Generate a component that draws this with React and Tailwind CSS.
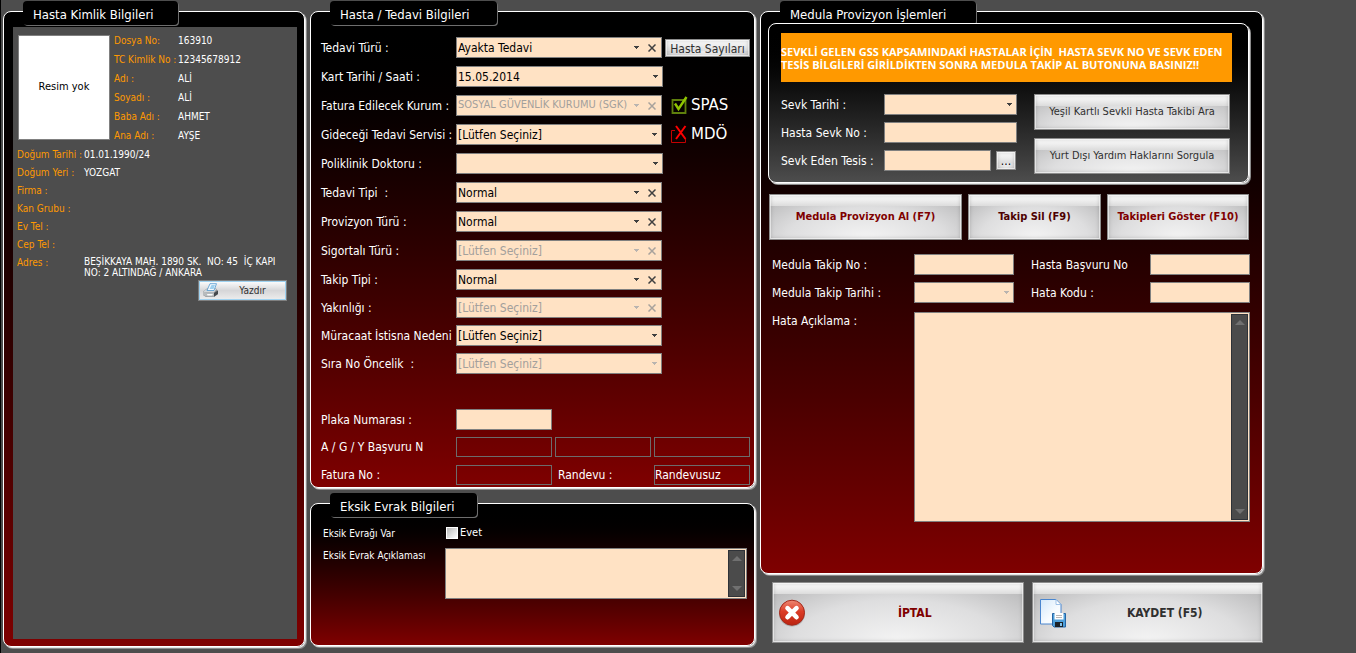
import { useId } from 'react'
import clsx from 'clsx'

const IDENTITY = [
  ['Dosya No:', '163910'],
  ['TC Kimlik No :', '12345678912'],
  ['Adı :', 'ALİ'],
  ['Soyadı :', 'ALİ'],
  ['Baba Adı :', 'AHMET'],
  ['Ana Adı :', 'AYŞE'],
]

const DETAILS = [
  ['Doğum Tarihi :', '01.01.1990/24'],
  ['Doğum Yeri :', 'YOZGAT'],
  ['Firma :', ''],
  ['Kan Grubu :', ''],
  ['Ev Tel :', ''],
  ['Cep Tel :', ''],
]

const EMPTY = '[Lütfen Seçiniz]'

const BUTTON_FACE =
  'border border-[#8c8c8c] bg-[linear-gradient(#ffffff,#dcdcdc_11px,transparent_11px),radial-gradient(ellipse_75%_130%_at_50%_100%,#f4f4f4,#dededf_55%,#b4b4b5)] shadow-[inset_0_0_0_1px_rgba(255,255,255,0.6),inset_0_0_4px_rgba(0,0,0,0.25)]'

function Panel({ title, tabClass, className, children }) {
  return (
    <section
      className={clsx(
        'relative rounded-lg border border-white bg-linear-to-b from-black to-[#7f0000] shadow-[1px_1px_0_#e4e4e4,2px_2px_0_#8a8a8a]',
        className,
      )}
    >
      <h2
        className={clsx(
          'absolute -top-[11px] left-[19px] h-6 rounded-sm bg-black pl-[10px] text-[13px] leading-[28px] text-white shadow-[1px_1px_0_#6e6e6e]',
          tabClass,
        )}
      >
        {title}
      </h2>
      {children}
    </section>
  )
}

function Arrow({ className }) {
  return (
    <svg
      viewBox="0 0 5 3"
      shapeRendering="crispEdges"
      className={clsx('pointer-events-none h-[3px] w-[5px]', className)}
      fill="currentColor"
    >
      <path d="M0 0h5v1h-1v1h-1v1h-1v-1h-1v-1h-1z" />
    </svg>
  )
}

function Combo({ id, value = '', disabled, clearable, small, className }) {
  return (
    <div
      className={clsx(
        'relative flex h-[21px] items-center border border-[#808080] bg-[#ffe2c4]',
        disabled ? 'text-[#a3a09c]' : 'text-black',
        className,
      )}
    >
      <select
        id={id}
        disabled={disabled}
        defaultValue={value}
        className={clsx(
          'h-full w-full appearance-none bg-transparent pl-px opacity-100 outline-none',
          small ? 'text-[11px]' : 'text-[12px]',
        )}
      >
        <option>{value}</option>
      </select>
      <Arrow
        className={clsx(
          'absolute',
          clearable ? 'right-[22px]' : 'right-[4px]',
          disabled ? 'text-[#b9b4b0]' : 'text-[#404040]',
        )}
      />
      {clearable && (
        <button
          type="button"
          aria-label="Temizle"
          disabled={disabled}
          className={clsx('absolute right-[5px]', disabled ? 'text-[#a8a29c]' : 'text-[#404040]')}
        >
          <svg viewBox="0 0 8 8" className="h-2 w-2" fill="none" stroke="currentColor" strokeWidth="1.5">
            <path d="M.5.5l7 7M7.5.5l-7 7" />
          </svg>
        </button>
      )}
    </div>
  )
}

function ComboRow({ label, width = 'w-[206px]', children, ...rest }) {
  const id = useId()
  return (
    <div className="flex h-[21px] items-center">
      <label htmlFor={id} className="w-[135px] shrink-0 whitespace-pre">
        {label}
      </label>
      <Combo id={id} className={width} {...rest} />
      {children}
    </div>
  )
}

function TextBox({ className, ...rest }) {
  return (
    <input
      type="text"
      className={clsx('h-[21px] border border-[#808080] bg-[#ffe2c4] px-[2px] text-black outline-none', className)}
      {...rest}
    />
  )
}

function OutlineBox({ className, ...rest }) {
  return (
    <input
      type="text"
      className={clsx('h-5 w-24 border border-[#6c6c6c] bg-transparent text-white outline-none', className)}
      {...rest}
    />
  )
}

function MemoBox({ id, className }) {
  return (
    <div className={clsx('relative border border-[#808080] bg-[#ffe2c4]', className)}>
      <textarea
        id={id}
        className="block h-full w-full resize-none overflow-hidden bg-transparent p-1 pr-5 text-black outline-none"
      />
      <div className="absolute inset-y-px right-px flex w-[17px] flex-col items-center justify-between border border-[#2e3238] bg-[#4b4b4b] py-[5px] text-[#707070]">
        <svg viewBox="0 0 10 5" className="h-[5px] w-[10px]" fill="currentColor">
          <path d="M5 0l5 5H0z" />
        </svg>
        <svg viewBox="0 0 10 5" className="h-[5px] w-[10px]" fill="currentColor">
          <path d="M0 0h10L5 5z" />
        </svg>
      </div>
    </div>
  )
}

function PushButton({ className, children }) {
  return (
    <button type="button" className={clsx(BUTTON_FACE, 'text-center', className)}>
      {children}
    </button>
  )
}

function PrinterIcon() {
  return (
    <svg viewBox="0 0 17 15" className="h-[15px] w-[17px]">
      <path d="M1 8.500L5 5.500h9l2 2.500v3l-4 3H4l-3-2z" fill="#8c9094" />
      <path d="M1 8.500l4-2.500h9.500L12 9.500H4z" fill="#d4d8da" />
      <path d="M5 7.500L8 .7h6.500L12 7.500z" fill="#f2f9fd" stroke="#4f97cf" strokeWidth=".8" />
      <path d="M7.500 6L9.500 2h3.500L11.500 6z" fill="#9ed0ee" />
      <path d="M1 9h2.500l1 1H12v3.500H4.500L1 12z" fill="#b7bbbd" />
      <path d="M12 10l4-2.500v3.500l-4 2.800z" fill="#44484c" />
      <path d="M5 11h6l-1 1.500H5.500z" fill="#fafafa" />
    </svg>
  )
}

function CancelIcon() {
  return (
    <svg viewBox="0 0 28 28" className="h-7 w-7">
      <defs>
        <linearGradient id="cancelFace" x1="0" y1="0" x2="0" y2="1">
          <stop offset="0" stopColor="#ee8873" />
          <stop offset=".45" stopColor="#db3c26" />
          <stop offset="1" stopColor="#bb2410" />
        </linearGradient>
      </defs>
      <circle cx="14" cy="14.5" r="13" fill="#777" opacity=".45" />
      <circle cx="14" cy="13.7" r="12.500" fill="url(#cancelFace)" stroke="#a62a1c" />
      <path d="M9.500 9.200l9 9M18.500 9.200l-9 9" stroke="#fff" strokeWidth="4.600" strokeLinecap="round" />
    </svg>
  )
}

function SaveIcon() {
  return (
    <svg viewBox="0 0 28 30" className="h-[30px] w-7">
      <defs>
        <linearGradient id="pageFace" x1="0" y1="0" x2="1" y2="1">
          <stop offset="0" stopColor="#d3e8fa" />
          <stop offset=".6" stopColor="#f8fcff" />
        </linearGradient>
      </defs>
      <path d="M1.500 1.500h15.500l5 5v19.500H1.500z" fill="url(#pageFace)" stroke="#4a86cf" />
      <path d="M17 1.500v5h5z" fill="#fff" stroke="#88b4e2" strokeWidth=".8" />
      <path d="M13.500 15.500h13v13.500h-11.500l-1.500-1.500z" fill="#4fa0da" stroke="#2565a5" />
      <path d="M15.500 15h9v6.500h-9z" fill="#fff" />
      <path d="M17 17.500h6M17 19.500h6" stroke="#b5b5b5" />
      <path d="M16 24h8v5h-8z" fill="#1c2228" />
      <path d="M21 25h2v3h-2z" fill="#7ec2ee" />
    </svg>
  )
}

function CheckMark() {
  return (
    <svg viewBox="0 0 17 19" className="h-[19px] w-[17px]" fill="none">
      <path d="M1.500 4h13v13h-13z" stroke="#5f7f0c" strokeWidth="1.800" />
      <path d="M4 7.500l3.500 5.500L15.500 1" stroke="#8fc400" strokeWidth="2.400" />
    </svg>
  )
}

function CrossMark() {
  return (
    <svg viewBox="0 0 17 19" className="h-[19px] w-[17px]" fill="none">
      <path d="M4 5.500H.5V17.500H14.500V14" stroke="#c40000" />
      <path d="M5 1l9.500 13M14.500 1L5 14" stroke="#f00" strokeWidth="2" />
    </svg>
  )
}

function IdentityPanel() {
  return (
    <Panel title="Hasta Kimlik Bilgileri" tabClass="w-[155px]" className="flex flex-1 pt-[15px] pr-[7px] pb-[7px] pl-[9px]">
      <div className="min-w-0 flex-1 bg-[#4d4d4d] px-1 pt-2 text-[10px] text-white">
        <div className="flex gap-1 pl-px">
          <div className="mb-px flex h-[105px] w-[92px] shrink-0 items-center justify-center border border-[#808080] bg-white text-[11px] text-black">
            Resim yok
          </div>
          <dl className="-mt-1 grid auto-rows-[19px] grid-cols-[64px_1fr] items-center">
            {IDENTITY.map(([label, value]) => (
              <div key={label} className="contents">
                <dt className="whitespace-nowrap text-[#ff9900]">{label}</dt>
                <dd>{value}</dd>
              </div>
            ))}
          </dl>
        </div>
        <dl className="grid auto-rows-[18px] grid-cols-[67px_1fr] items-center">
          {DETAILS.map(([label, value]) => (
            <div key={label} className="contents">
              <dt className="whitespace-nowrap text-[#ff9900]">{label}</dt>
              <dd>{value}</dd>
            </div>
          ))}
          <dt className="text-[#ff9900]">Adres :</dt>
          <dd className="self-start pt-[3px] leading-[11px] whitespace-pre-wrap">
            {'BEŞİKKAYA MAH. 1890 SK.  NO: 45  İÇ KAPI\nNO: 2 ALTINDAĞ / ANKARA'}
          </dd>
        </dl>
        <div className="mt-[9px] flex justify-end pr-[6px]">
          <button
            type="button"
            className="flex h-[21px] w-[89px] items-center border border-[#808080] bg-linear-to-b from-white via-[#d6d6d8] to-[#eeeeee] pl-[3px] text-[#303030] shadow-[inset_0_0_0_1px_#9fd2f0]"
          >
            <PrinterIcon />
            <span className="flex-1 text-center">Yazdır</span>
          </button>
        </div>
      </div>
    </Panel>
  )
}

function TreatmentPanel() {
  return (
    <Panel
      title="Hasta / Tedavi Bilgileri"
      tabClass="w-[167px]"
      className="pt-[25px] pr-1 pb-[2px] pl-[10px] text-[12px] text-white"
    >
      <div className="flex flex-col gap-2">
        <ComboRow label="Tedavi Türü :" value="Ayakta Tedavi" clearable>
          <PushButton className="ml-[3px] h-[18px] w-[85px] text-[#303030]">Hasta Sayıları</PushButton>
        </ComboRow>
        <ComboRow label="Kart Tarihi / Saati :" value="15.05.2014" width="w-[207px]" />
        <ComboRow label="Fatura Edilecek Kurum :" value="SOSYAL GÜVENLİK KURUMU (SGK)" disabled clearable small>
          <span className="ml-[9px] flex items-center gap-[3px] font-['DejaVu_Sans',sans-serif] text-[15px]">
            <CheckMark /> SPAS
          </span>
        </ComboRow>
        <ComboRow label="Gideceği Tedavi Servisi :" value={EMPTY}>
          <span className="ml-[9px] flex items-center gap-[3px] font-['DejaVu_Sans',sans-serif] text-[15px]">
            <CrossMark /> MDÖ
          </span>
        </ComboRow>
        <ComboRow label="Poliklinik Doktoru :" width="w-[207px]" />
        <ComboRow label="Tedavi Tipi  :" value="Normal" clearable />
        <ComboRow label="Provizyon Türü :" value="Normal" clearable />
        <ComboRow label="Sigortalı Türü :" value={EMPTY} disabled clearable />
        <ComboRow label="Takip Tipi :" value="Normal" clearable />
      </div>
      <div className="mt-[7px] flex flex-col gap-[7px]">
        <ComboRow label="Yakınlığı :" value={EMPTY} disabled clearable />
        <ComboRow label="Müracaat İstisna Nedeni" value={EMPTY} />
        <ComboRow label="Sıra No Öncelik  :" value={EMPTY} disabled />
      </div>
      <div className="mt-[35px] flex flex-col gap-[7px]">
        <div className="flex h-[21px] items-center">
          <label htmlFor="plaka" className="w-[135px]">
            Plaka Numarası :
          </label>
          <TextBox id="plaka" className="w-24" />
        </div>
        <div className="flex h-5 items-center">
          <label htmlFor="basvuru" className="w-[135px]">
            A / G / Y Başvuru N
          </label>
          <div className="flex gap-[3px]">
            <OutlineBox id="basvuru" />
            <OutlineBox aria-label="G Başvuru No" />
            <OutlineBox aria-label="Y Başvuru No" />
          </div>
        </div>
        <div className="flex h-[21px] items-center">
          <label htmlFor="fatura" className="w-[135px]">
            Fatura No :
          </label>
          <OutlineBox id="fatura" />
          <label htmlFor="randevu" className="w-[102px] pl-[6px]">
            Randevu :
          </label>
          <OutlineBox id="randevu" defaultValue="Randevusuz" />
        </div>
      </div>
    </Panel>
  )
}

function MissingDocsPanel() {
  return (
    <Panel
      title="Eksik Evrak Bilgileri"
      tabClass="w-[147px]"
      className="flex-1 pt-5 pr-[7px] pb-4 pl-3 text-[10px] text-white"
    >
      <div className="flex h-[18px] items-center">
        <span className="w-[123px]">Eksik Evrağı Var</span>
        <label className="flex items-center gap-[2px] text-[11px]">
          <input
            type="checkbox"
            className="h-3 w-3 appearance-none border border-white bg-linear-to-br from-[#b8b8b8] to-white"
          />
          Evet
        </label>
      </div>
      <div className="mt-[6px] flex">
        <label htmlFor="eksik" className="w-[122px] shrink-0 whitespace-nowrap">
          Eksik Evrak Açıklaması
        </label>
        <MemoBox id="eksik" className="h-[51px] flex-1" />
      </div>
    </Panel>
  )
}

function ReferralBox() {
  return (
    <div className="relative mr-px rounded-lg border border-white bg-linear-to-b from-black to-[#4d4d4d] px-3 pt-[9px] pb-2 shadow-[1px_1px_0_#e4e4e4,2px_2px_0_#8a8a8a]">
      <p className="mr-1 flex h-[49px] items-center bg-[#ff9900] font-['Open_Sans',sans-serif] text-[11px] leading-[13px] font-bold whitespace-pre">
        {'SEVKLİ GELEN GSS KAPSAMINDAKİ HASTALAR İÇİN  HASTA SEVK NO VE SEVK EDEN\nTESİS BİLGİLERİ GİRİLDİKTEN SONRA MEDULA TAKİP AL BUTONUNA BASINIZ!!'}
      </p>
      <div className="mt-3 mr-[6px] flex justify-between">
        <div className="flex flex-col gap-[7px]">
          <div className="flex items-center">
            <label htmlFor="sevkTarihi" className="w-[103px]">
              Sevk Tarihi :
            </label>
            <Combo id="sevkTarihi" className="w-[133px]" />
          </div>
          <div className="flex items-center">
            <label htmlFor="sevkNo" className="w-[103px]">
              Hasta Sevk No :
            </label>
            <TextBox id="sevkNo" className="w-[133px]" />
          </div>
          <div className="flex items-center">
            <label htmlFor="tesis" className="w-[103px]">
              Sevk Eden Tesis :
            </label>
            <TextBox id="tesis" className="w-[107px]" />
            <PushButton className="ml-[5px] h-[19px] w-5 leading-3 text-black">...</PushButton>
          </div>
        </div>
        <div className="flex flex-col gap-2 text-[11px] text-[#303030]">
          <PushButton className="h-9 w-[196px]">Yeşil Kartlı Sevkli Hasta Takibi Ara</PushButton>
          <PushButton className="h-9 w-[196px]">Yurt Dışı Yardım Haklarını Sorgula</PushButton>
        </div>
      </div>
    </div>
  )
}

function MedulaPanel() {
  return (
    <Panel
      title="Medula Provizyon İşlemleri"
      tabClass="w-[196px]"
      className="flex-1 pt-[11px] pr-3 pb-10 pl-[7px] text-[12px] text-white"
    >
      <ReferralBox />
      <div className="mx-px mt-[11px] grid grid-cols-[193fr_133fr_142fr] gap-[6px] text-[11px] font-bold text-[#7f0000]">
        <PushButton className="h-[46px]">Medula Provizyon Al (F7)</PushButton>
        <PushButton className="h-[46px] text-[#4d0000]">Takip Sil (F9)</PushButton>
        <PushButton className="h-[46px]">Takipleri Göster (F10)</PushButton>
      </div>
      <div className="mt-[14px] grid grid-cols-[142px_100px_1fr_100px] items-center gap-y-[7px] pl-1">
        <label htmlFor="takipNo">Medula Takip No :</label>
        <TextBox id="takipNo" className="w-full" />
        <label htmlFor="basvuruNo" className="pl-[17px]">
          Hasta Başvuru No
        </label>
        <TextBox id="basvuruNo" className="w-full" />
        <label htmlFor="takipTarihi">Medula Takip Tarihi :</label>
        <Combo id="takipTarihi" disabled />
        <label htmlFor="hataKodu" className="pl-[17px]">
          Hata Kodu :
        </label>
        <TextBox id="hataKodu" className="w-full" />
      </div>
      <div className="mt-[9px] flex pl-1">
        <label htmlFor="hata" className="w-[142px] shrink-0">
          Hata Açıklama :
        </label>
        <MemoBox id="hata" className="h-[210px] flex-1" />
      </div>
    </Panel>
  )
}

export default function App() {
  return (
    <main className="grid min-h-screen grid-cols-[minmax(0,302fr)_minmax(0,445fr)_minmax(0,503fr)_minmax(0,88fr)] gap-x-[5px] border-l border-black bg-[#4d4d4d] pt-[11px] pl-[2px] font-['DejaVu_Sans_Condensed','DejaVu_Sans',sans-serif]">
      <div className="flex flex-col pb-[6px]">
        <IdentityPanel />
      </div>
      <div className="flex flex-col gap-[15px] pb-[7px]">
        <TreatmentPanel />
        <MissingDocsPanel />
      </div>
      <div className="flex flex-col gap-2 pb-[10px]">
        <MedulaPanel />
        <div className="grid grid-cols-[253fr_231fr] gap-2 pl-3 text-[12px] font-bold">
          <PushButton className="flex h-[61px] items-center pl-[5px] text-[#7f0000]">
            <CancelIcon />
            <span className="flex-1">İPTAL</span>
          </PushButton>
          <PushButton className="flex h-[61px] items-center pl-[6px] text-[#303030]">
            <SaveIcon />
            <span className="flex-1">KAYDET (F5)</span>
          </PushButton>
        </div>
      </div>
    </main>
  )
}
